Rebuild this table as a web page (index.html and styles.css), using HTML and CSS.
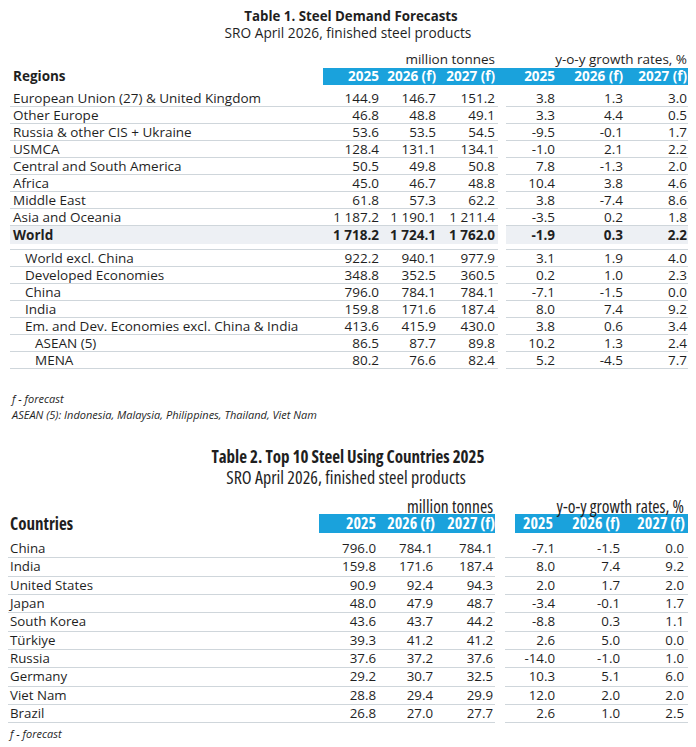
FILE: index.html
```html
<!DOCTYPE html>
<html>
<head>
<meta charset="utf-8">
<link rel="stylesheet" href="styles.css">
</head>
<body>
<div class="page">
  <section class="block t1">
    <div class="title">Table 1. Steel Demand Forecasts</div>
    <div class="sub">SRO April 2026, finished steel products</div>
    <table class="tbl">
      <colgroup>
        <col class="c-lab"><col class="c1"><col class="c2"><col class="c3"><col class="c-sp"><col class="c4"><col class="c5"><col class="c6">
      </colgroup>
      <tr class="units">
        <td></td><td colspan="3" class="r p3">million tonnes</td><td></td><td colspan="3" class="r p1">y-o-y growth rates, %</td>
      </tr>
      <tr class="head">
        <td class="lab">Regions</td>
        <td class="b p2">2025</td><td class="b p2">2026 (f)</td><td class="b p3">2027 (f)</td><td class="b sp"></td>
        <td class="b p3">2025</td><td class="b p2">2026 (f)</td><td class="b p1">2027 (f)</td>
      </tr>
      <tr class="gap"><td colspan="8"></td></tr>
      <tr class="row"><td class="lab">European Union (27) &amp; United Kingdom</td><td class="p2">144.9</td><td class="p2">146.7</td><td class="p3">151.2</td><td class="sp"></td><td class="p3">3.8</td><td class="p2">1.3</td><td class="p1">3.0</td></tr>
      <tr class="row"><td class="lab">Other Europe</td><td class="p2">46.8</td><td class="p2">48.8</td><td class="p3">49.1</td><td class="sp"></td><td class="p3">3.3</td><td class="p2">4.4</td><td class="p1">0.5</td></tr>
      <tr class="row"><td class="lab">Russia &amp; other CIS + Ukraine</td><td class="p2">53.6</td><td class="p2">53.5</td><td class="p3">54.5</td><td class="sp"></td><td class="p3">-9.5</td><td class="p2">-0.1</td><td class="p1">1.7</td></tr>
      <tr class="row"><td class="lab">USMCA</td><td class="p2">128.4</td><td class="p2">131.1</td><td class="p3">134.1</td><td class="sp"></td><td class="p3">-1.0</td><td class="p2">2.1</td><td class="p1">2.2</td></tr>
      <tr class="row"><td class="lab">Central and South America</td><td class="p2">50.5</td><td class="p2">49.8</td><td class="p3">50.8</td><td class="sp"></td><td class="p3">7.8</td><td class="p2">-1.3</td><td class="p1">2.0</td></tr>
      <tr class="row"><td class="lab">Africa</td><td class="p2">45.0</td><td class="p2">46.7</td><td class="p3">48.8</td><td class="sp"></td><td class="p3">10.4</td><td class="p2">3.8</td><td class="p1">4.6</td></tr>
      <tr class="row"><td class="lab">Middle East</td><td class="p2">61.8</td><td class="p2">57.3</td><td class="p3">62.2</td><td class="sp"></td><td class="p3">3.8</td><td class="p2">-7.4</td><td class="p1">8.6</td></tr>
      <tr class="row"><td class="lab">Asia and Oceania</td><td class="p2">1 187.2</td><td class="p2">1 190.1</td><td class="p3">1 211.4</td><td class="sp"></td><td class="p3">-3.5</td><td class="p2">0.2</td><td class="p1">1.8</td></tr>
      <tr class="world"><td class="lab">World</td><td class="p2">1 718.2</td><td class="p2">1 724.1</td><td class="p3">1 762.0</td><td class="sp"></td><td class="p3">-1.9</td><td class="p2">0.3</td><td class="p1">2.2</td></tr>
      <tr class="sep"><td></td><td></td><td></td><td></td><td class="sp"></td><td></td><td></td><td></td></tr>
      <tr class="row ind"><td class="lab">World excl. China</td><td class="p2">922.2</td><td class="p2">940.1</td><td class="p3">977.9</td><td class="sp"></td><td class="p3">3.1</td><td class="p2">1.9</td><td class="p1">4.0</td></tr>
      <tr class="row ind"><td class="lab">Developed Economies</td><td class="p2">348.8</td><td class="p2">352.5</td><td class="p3">360.5</td><td class="sp"></td><td class="p3">0.2</td><td class="p2">1.0</td><td class="p1">2.3</td></tr>
      <tr class="row ind"><td class="lab">China</td><td class="p2">796.0</td><td class="p2">784.1</td><td class="p3">784.1</td><td class="sp"></td><td class="p3">-7.1</td><td class="p2">-1.5</td><td class="p1">0.0</td></tr>
      <tr class="row ind"><td class="lab">India</td><td class="p2">159.8</td><td class="p2">171.6</td><td class="p3">187.4</td><td class="sp"></td><td class="p3">8.0</td><td class="p2">7.4</td><td class="p1">9.2</td></tr>
      <tr class="row ind"><td class="lab">Em. and Dev. Economies excl. China &amp; India</td><td class="p2">413.6</td><td class="p2">415.9</td><td class="p3">430.0</td><td class="sp"></td><td class="p3">3.8</td><td class="p2">0.6</td><td class="p1">3.4</td></tr>
      <tr class="row ind2"><td class="lab">ASEAN (5)</td><td class="p2">86.5</td><td class="p2">87.7</td><td class="p3">89.8</td><td class="sp"></td><td class="p3">10.2</td><td class="p2">1.3</td><td class="p1">2.4</td></tr>
      <tr class="row ind2"><td class="lab">MENA</td><td class="p2">80.2</td><td class="p2">76.6</td><td class="p3">82.4</td><td class="sp"></td><td class="p3">5.2</td><td class="p2">-4.5</td><td class="p1">7.7</td></tr>
    </table>
    <div class="notes">
      <div>f - forecast</div>
      <div>ASEAN (5): Indonesia, Malaysia, Philippines, Thailand, Viet Nam</div>
    </div>
  </section>

  <section class="block t2">
    <div class="title cond">Table 2. Top 10 Steel Using Countries 2025</div>
    <div class="sub cond">SRO April 2026, finished steel products</div>
    <table class="tbl">
      <colgroup>
        <col class="d-lab"><col class="d1"><col class="d2"><col class="d3"><col class="d-sp"><col class="d4"><col class="d5"><col class="d6">
      </colgroup>
      <tr class="units cond">
        <td></td><td colspan="3" class="r q2">million tonnes</td><td></td><td colspan="3" class="r q4">y-o-y growth rates, %</td>
      </tr>
      <tr class="head cond">
        <td class="lab">Countries</td>
        <td class="b q3">2025</td><td class="b q1">2026 (f)</td><td class="b q0">2027 (f)</td><td class="sp"></td>
        <td class="b b-off q5">2025</td><td class="b q3">2026 (f)</td><td class="b q3">2027 (f)</td>
      </tr>
      <tr class="gap"><td colspan="8"></td></tr>
      <tr class="row"><td class="lab">China</td><td class="q3">796.0</td><td class="q3">784.1</td><td class="q2">784.1</td><td class="sp"></td><td class="q3">-7.1</td><td class="q3">-1.5</td><td class="q4">0.0</td></tr>
      <tr class="row"><td class="lab">India</td><td class="q3">159.8</td><td class="q3">171.6</td><td class="q2">187.4</td><td class="sp"></td><td class="q3">8.0</td><td class="q3">7.4</td><td class="q4">9.2</td></tr>
      <tr class="row"><td class="lab">United States</td><td class="q3">90.9</td><td class="q3">92.4</td><td class="q2">94.3</td><td class="sp"></td><td class="q3">2.0</td><td class="q3">1.7</td><td class="q4">2.0</td></tr>
      <tr class="row"><td class="lab">Japan</td><td class="q3">48.0</td><td class="q3">47.9</td><td class="q2">48.7</td><td class="sp"></td><td class="q3">-3.4</td><td class="q3">-0.1</td><td class="q4">1.7</td></tr>
      <tr class="row"><td class="lab">South Korea</td><td class="q3">43.6</td><td class="q3">43.7</td><td class="q2">44.2</td><td class="sp"></td><td class="q3">-8.8</td><td class="q3">0.3</td><td class="q4">1.1</td></tr>
      <tr class="row"><td class="lab">Türkiye</td><td class="q3">39.3</td><td class="q3">41.2</td><td class="q2">41.2</td><td class="sp"></td><td class="q3">2.6</td><td class="q3">5.0</td><td class="q4">0.0</td></tr>
      <tr class="row"><td class="lab">Russia</td><td class="q3">37.6</td><td class="q3">37.2</td><td class="q2">37.6</td><td class="sp"></td><td class="q3">-14.0</td><td class="q3">-1.0</td><td class="q4">1.0</td></tr>
      <tr class="row"><td class="lab">Germany</td><td class="q3">29.2</td><td class="q3">30.7</td><td class="q2">32.5</td><td class="sp"></td><td class="q3">10.3</td><td class="q3">5.1</td><td class="q4">6.0</td></tr>
      <tr class="row"><td class="lab">Viet Nam</td><td class="q3">28.8</td><td class="q3">29.4</td><td class="q2">29.9</td><td class="sp"></td><td class="q3">12.0</td><td class="q3">2.0</td><td class="q4">2.0</td></tr>
      <tr class="row"><td class="lab">Brazil</td><td class="q3">26.8</td><td class="q3">27.0</td><td class="q2">27.7</td><td class="sp"></td><td class="q3">2.6</td><td class="q3">1.0</td><td class="q4">2.5</td></tr>
    </table>
    <div class="notes">
      <div>f - forecast</div>
    </div>
  </section>
</div>
</body>
</html>
```

FILE: styles.css
```css
* { box-sizing: border-box; }
html, body { margin: 0; padding: 0; background: #fff; }
body {
  font-family: "Open Sans", "DejaVu Sans", sans-serif;
  color: #1f1f1f;
  font-size: 13px;
}
.page { padding-top: 8px; }
.block { width: 696px; }

.title {
  text-align: center;
  font-weight: 700;
  font-size: 13.3px;
  line-height: 17px;
  padding-left: 6px;
}
.sub {
  text-align: center;
  font-size: 13.7px;
  line-height: 16px;
  padding-left: 0;
}
.cond { font-stretch: 75%; }

.tbl {
  border-collapse: separate;
  border-spacing: 0;
  table-layout: fixed;
  width: 678px;
  margin-left: 10px;
}
.t1 .tbl { margin-top: 9px; }
.tbl td {
  padding: 0;
  text-align: right;
  white-space: nowrap;
  font-size: 13.5px;
  line-height: 16px;
}
.tbl td.lab { text-align: left; padding-left: 3px; }

.c-lab { width: 313px; }
.c1 { width: 58px; }
.c2 { width: 57px; }
.c3 { width: 60px; }
.c-sp { width: 8px; }
.c4 { width: 52px; }
.c5 { width: 67px; }
.c6 { width: 63px; }

.p1 { padding-right: 1px !important; }
.p2 { padding-right: 2px !important; }
.p3 { padding-right: 3px !important; }

.units td { height: 18px; line-height: 18px; vertical-align: middle; }
.head td { height: 17px; line-height: 17px; font-weight: 700; }
.head td.b { background: #1aa2dc; color: #fff; }
.gap td { height: 5px; line-height: 0; }

.row td {
  height: 17px;
  border-bottom: 1px solid #cfd6db;
}
.row td.sp, .sep td.sp { border-bottom: none; }
.row.ind td.lab { padding-left: 15px; }
.row.ind2 td.lab { padding-left: 25px; }

.world td {
  height: 18px;
  line-height: 18px;
  font-weight: 700;
  background: #edf0f4;
}
.world td.sp { background: #fff; }
.sep td { height: 6px; line-height: 0; border-bottom: 1px solid #cfd6db; }

.notes {
  font-style: italic;
  font-size: 11px;
  line-height: 16px;
  padding-left: 12px;
  padding-top: 22px;
}

/* Table 2 */
.t2 { margin-top: 24px; }
.t2 .title { font-size: 17px; line-height: 20px; padding-left: 0; }
.t2 .sub { font-size: 18px; line-height: 20px; padding-left: 0; margin-left: -4px; }
.t2 .tbl { margin-left: 8px; margin-top: 7px; width: 680px; }
.d-lab { width: 311px; }
.d1 { width: 60px; }
.d2 { width: 57px; }
.d3 { width: 59px; }
.d-sp { width: 10px; }
.d4 { width: 53px; }
.d5 { width: 65px; }
.d6 { width: 65px; }
.q0 { padding-right: 0 !important; }
.q1 { padding-right: 1px !important; }
.q2 { padding-right: 2px !important; }
.q3 { padding-right: 3px !important; }
.q4 { padding-right: 4px !important; }
.q5 { padding-right: 5px !important; }
.t2 .tbl td { font-size: 13.3px; }
.t2 .tbl td.lab { padding-left: 2px; }
.t2 .units td { font-size: 17.5px; height: 20px; line-height: 16px; vertical-align: bottom; }
.t2 .head td { font-size: 16px; height: 19px; line-height: 19px; }
.t2 .head td.lab { font-size: 17px; }
.t2 .head td.b-off {
  background: linear-gradient(to right, #fff 10px, #1aa2dc 10px);
}
.t2 .gap td { height: 7px; }
.t2 .row td { height: 18.33px; line-height: 17.33px; }
.t2 .notes { padding-left: 10px; padding-top: 3px; }
```
